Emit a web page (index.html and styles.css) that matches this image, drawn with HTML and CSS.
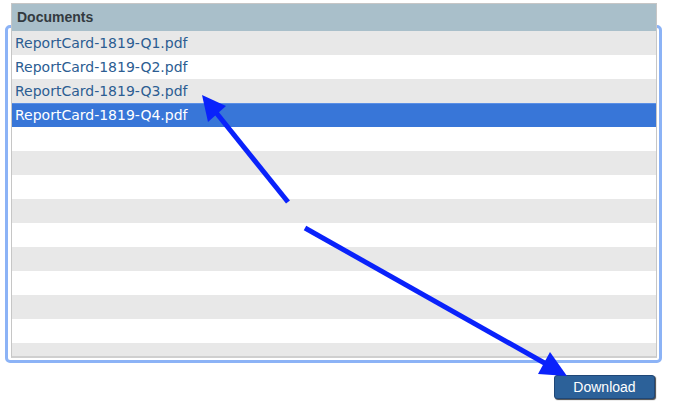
FILE: index.html
```html
<!DOCTYPE html>
<html>
<head>
<meta charset="utf-8">
<link rel="stylesheet" href="styles.css">
</head>
<body>
<div class="page">
  <div class="header">Documents</div>
  <div class="ring">
    <div class="list">
      <div class="row alt">ReportCard-1819-Q1.pdf</div>
      <div class="row">ReportCard-1819-Q2.pdf</div>
      <div class="row alt">ReportCard-1819-Q3.pdf</div>
      <div class="row selected">ReportCard-1819-Q4.pdf</div>
      <div class="row"></div>
      <div class="row alt"></div>
      <div class="row"></div>
      <div class="row alt"></div>
      <div class="row"></div>
      <div class="row alt"></div>
      <div class="row"></div>
      <div class="row alt"></div>
      <div class="row"></div>
      <div class="row alt"></div>
    </div>
  </div>
  <div class="actions">
    <button class="btn">Download</button>
  </div>
</div>
<svg class="arrows" width="674" height="402" viewBox="0 0 674 402">
  <line x1="288" y1="202" x2="214" y2="110" stroke="#0a22fb" stroke-width="5"/>
  <polygon points="202,95 226,106 208,122" fill="#0a22fb"/>
  <line x1="305" y1="228" x2="548" y2="365" stroke="#0a22fb" stroke-width="5"/>
  <polygon points="567,376 550,352 538,374" fill="#0a22fb"/>
</svg>
</body>
</html>
```
FILE: styles.css
```css
html, body {
  margin: 0;
  padding: 0;
  background: #ffffff;
}
body {
  width: 674px;
  height: 402px;
  overflow: hidden;
  position: relative;
  font-family: "Liberation Sans", Arial, sans-serif;
}
.page {
  padding: 3px 0 0 5px;
}
.header {
  position: relative;
  z-index: 1;
  margin-left: 6px;
  width: 646px;
  box-sizing: border-box;
  height: 28px;
  border: 1px solid #c6c6c6;
  border-bottom: none;
  background: #a9bfca;
  color: #333a40;
  font-weight: bold;
  font-size: 14px;
  line-height: 26px;
  padding-left: 5px;
}
.ring {
  margin-top: -6px;
  width: 657px;
  box-sizing: border-box;
  border: 3px solid #8cb3f6;
  border-radius: 5px;
  padding: 3px 2px 2px 3px;
}
.list {
  height: 327px;
  box-sizing: border-box;
  border: 1px solid #c6c6c6;
  border-top: none;
  border-bottom-width: 2px;
  border-bottom-color: #cfcfcf;
  overflow: hidden;
  background: #ffffff;
}
.row {
  height: 24px;
  line-height: 24px;
  padding-left: 3px;
  font-family: "DejaVu Sans", "Lucida Grande", sans-serif;
  font-size: 14px;
  color: #2c5d92;
  white-space: nowrap;
}
.row.alt {
  background: #e8e8e8;
}
.row.selected {
  background: #3876d8;
  color: #ffffff;
  box-shadow: inset 0 1px 0 #5a8fe6;
}
.actions {
  display: flex;
  justify-content: flex-end;
  width: 657px;
  padding-right: 7px;
  box-sizing: border-box;
  margin-top: 12px;
}
.btn {
  width: 101px;
  height: 24px;
  border: 1px solid #1f4777;
  border-radius: 3px;
  background: #2c6199;
  color: #ffffff;
  font-family: "Liberation Sans", Arial, sans-serif;
  font-size: 14px;
  padding: 0;
  box-shadow: 1px 1px 1px #4a4a4a;
}
.arrows {
  position: absolute;
  left: 0;
  top: 0;
  pointer-events: none;
}
```
